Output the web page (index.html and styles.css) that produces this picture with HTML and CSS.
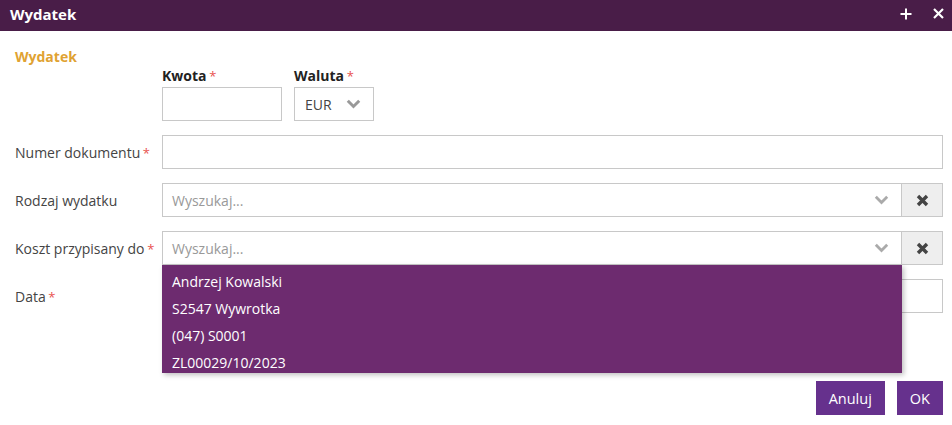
FILE: index.html
```html
<!DOCTYPE html>
<html lang="pl">
<head>
<meta charset="utf-8">
<link rel="stylesheet" href="styles.css">
</head>
<body>
<div class="header">
  <span class="header-title">Wydatek</span>
  <div class="header-icons">
    <svg class="hicon" width="12" height="12" viewBox="0 0 12 12"><path d="M6 0.5V11.5M0.5 6H11.5" stroke="#fff" stroke-width="2"/></svg>
    <svg class="hicon" width="11" height="11" viewBox="0 0 11 11"><path d="M1 1L10 10M10 1L1 10" stroke="#fff" stroke-width="2.2"/></svg>
  </div>
</div>
<div class="content">
  <div class="section-title">Wydatek</div>
  <div class="amount-row">
    <div class="field kwota">
      <div class="top-label">Kwota <span class="req">*</span></div>
      <div class="input"></div>
    </div>
    <div class="field waluta">
      <div class="top-label">Waluta <span class="req">*</span></div>
      <div class="input select-small">
        <span>EUR</span>
        <svg width="15" height="10" viewBox="0 0 15 10"><path d="M1.8 1.8L7.5 7.5L13.2 1.8" fill="none" stroke="#999" stroke-width="3"/></svg>
      </div>
    </div>
  </div>
  <div class="row first">
    <div class="label">Numer dokumentu <span class="req">*</span></div>
    <div class="input grow"></div>
  </div>
  <div class="row">
    <div class="label">Rodzaj wydatku</div>
    <div class="combo">
      <div class="input grow select">
        <span class="ph">Wyszukaj...</span>
        <svg width="15" height="10" viewBox="0 0 15 10"><path d="M1.8 1.8L7.5 7.5L13.2 1.8" fill="none" stroke="#aaa" stroke-width="2.8"/></svg>
      </div>
      <div class="clear"><svg width="13" height="13" viewBox="0 0 13 13"><path d="M2 2L11 11M11 2L2 11" stroke="#444" stroke-width="3.4"/></svg></div>
    </div>
  </div>
  <div class="row">
    <div class="label">Koszt przypisany do <span class="req">*</span></div>
    <div class="combo">
      <div class="input grow select">
        <span class="ph">Wyszukaj...</span>
        <svg width="15" height="10" viewBox="0 0 15 10"><path d="M1.8 1.8L7.5 7.5L13.2 1.8" fill="none" stroke="#aaa" stroke-width="2.8"/></svg>
        <ul class="dropdown">
          <li>Andrzej Kowalski</li>
          <li>S2547 Wywrotka</li>
          <li>(047) S0001</li>
          <li>ZL00029/10/2023</li>
        </ul>
      </div>
      <div class="clear"><svg width="13" height="13" viewBox="0 0 13 13"><path d="M2 2L11 11M11 2L2 11" stroke="#444" stroke-width="3.4"/></svg></div>
    </div>
  </div>
  <div class="row">
    <div class="label">Data <span class="req">*</span></div>
    <div class="input grow"></div>
  </div>
  <div class="actions">
    <button class="btn">Anuluj</button>
    <button class="btn">OK</button>
  </div>
</div>
</body>
</html>
```
FILE: styles.css
```css
* { box-sizing: border-box; }
body {
  margin: 0;
  font-family: "Open Sans", "Noto Sans", sans-serif;
  font-size: 14px;
  color: #333;
  background: #fff;
}
.header {
  height: 31px;
  background: #491d48;
  display: flex;
  align-items: center;
  justify-content: space-between;
  padding: 0 8px 0 10px;
}
.header-title {
  color: #fff;
  font-weight: 700;
  font-size: 15px;
  margin-top: -3px;
}
.header-icons {
  display: flex;
  align-items: center;
  gap: 21px;
  margin-top: -4px;
}
.hicon { display: block; }
.content {
  padding: 0 9px 0 15px;
}
.section-title {
  color: #e0a232;
  font-weight: 700;
  font-size: 14px;
  line-height: 18px;
  padding-top: 17px;
}
.amount-row {
  display: flex;
  gap: 12px;
  margin-left: 147px;
  margin-top: 1px;
}
.top-label {
  font-weight: 700;
  color: #222;
  line-height: 18px;
  margin-bottom: 2px;
}
.req { color: #e8524f; font-weight: 400; font-size: 13px; margin-left: -1px; }
.input {
  height: 34px;
  border: 1px solid #c8c8c8;
  background: #fff;
}
.kwota .input { width: 120px; }
.waluta .input { width: 80px; }
.select-small {
  display: flex;
  align-items: center;
  justify-content: space-between;
  padding: 0 12px 0 10px;
  color: #444;
}
.row {
  display: flex;
  align-items: center;
  margin-top: 14px;
}
.label {
  width: 147px;
  flex: none;
  color: #444;
  line-height: 18px;
  margin-top: 2px;
}
.grow { flex: 1; }
.combo { flex: 1; display: flex; }
.select {
  position: relative;
  display: flex;
  align-items: center;
  justify-content: space-between;
  padding: 0 12px 0 9px;
}
.ph { color: #999; }
.clear {
  width: 42px;
  height: 34px;
  border: 1px solid #c8c8c8;
  margin-left: -1px;
  background: #eee;
  display: flex;
  align-items: center;
  justify-content: center;
}
.dropdown {
  position: absolute;
  left: -1px;
  right: -1px;
  top: 33px;
  height: 108px;
  overflow: hidden;
  margin: 0;
  padding: 3px 0 0 0;
  list-style: none;
  background: #6d2b6f;
  box-shadow: 2px 2px 5px rgba(0,0,0,0.25);
  z-index: 5;
}
.dropdown li {
  color: #fff;
  height: 27px;
  line-height: 27px;
  padding-left: 10px;
}
.actions {
  display: flex;
  justify-content: flex-end;
  gap: 12px;
  margin-top: 68px;
}
.btn {
  height: 34px;
  border: none;
  background: #66318d;
  color: #fff;
  font-family: "Open Sans", "Noto Sans", sans-serif;
  font-size: 14.5px;
  padding: 0 13px;
  cursor: pointer;
}
```
